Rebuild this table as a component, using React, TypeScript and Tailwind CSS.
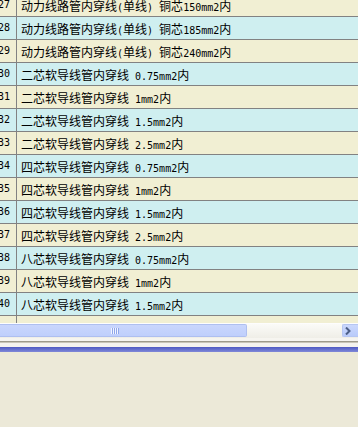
import React from "react";

type Row = { no: number; name: string };

const rows: Row[] = [
  { no: 27, name: "动力线路管内穿线(单线) 铜芯150mm2内" },
  { no: 28, name: "动力线路管内穿线(单线) 铜芯185mm2内" },
  { no: 29, name: "动力线路管内穿线(单线) 铜芯240mm2内" },
  { no: 30, name: "二芯软导线管内穿线 0.75mm2内" },
  { no: 31, name: "二芯软导线管内穿线 1mm2内" },
  { no: 32, name: "二芯软导线管内穿线 1.5mm2内" },
  { no: 33, name: "二芯软导线管内穿线 2.5mm2内" },
  { no: 34, name: "四芯软导线管内穿线 0.75mm2内" },
  { no: 35, name: "四芯软导线管内穿线 1mm2内" },
  { no: 36, name: "四芯软导线管内穿线 1.5mm2内" },
  { no: 37, name: "四芯软导线管内穿线 2.5mm2内" },
  { no: 38, name: "八芯软导线管内穿线 0.75mm2内" },
  { no: 39, name: "八芯软导线管内穿线 1mm2内" },
  { no: 40, name: "八芯软导线管内穿线 1.5mm2内" },
];

const latin = { fontFamily: '"DejaVu Sans Mono", "Liberation Mono", monospace' };
const cjk = { fontFamily: '"Noto Sans CJK SC", "Noto Sans", sans-serif' };

// Half-width runs in a 6px-advance mono face, full-width runs in the CJK face.
function MixedText({ text }: { text: string }) {
  const parts = text.split(/([\u0000-\u00ff]+)/).filter((p) => p.length > 0);
  return (
    <span className="whitespace-pre">
      {parts.map((p, i) =>
        /^[\u0000-\u00ff]+$/.test(p) ? (
          <span key={i} style={latin} className="text-[10px]">
            {p}
          </span>
        ) : (
          <span key={i} style={cjk} className="text-[12px]">
            {p}
          </span>
        )
      )}
    </span>
  );
}

function TableRow({ row, index }: { row: Row | null; index: number }) {
  const bg = index % 2 === 0 ? "bg-[#f1efd3]" : "bg-[#cfeff0]";
  return (
    <div className={`flex h-[23px] shrink-0 border-b border-[#828282] ${bg}`}>
      <div
        style={latin}
        className="flex w-[17px] shrink-0 items-center justify-end overflow-hidden border-r border-[#828282] pr-[6px] text-[10px] leading-none text-black"
      >
        <span className="whitespace-pre">{row ? row.no : ""}</span>
      </div>
      <div className="flex flex-1 items-center pl-[4px] leading-none text-black">
        {row ? <MixedText text={row.name} /> : null}
      </div>
    </div>
  );
}

function Grip() {
  return (
    <div className="ml-[111px] flex h-[6px] gap-0">
      {[0, 1, 2, 3].map((i) => (
        <div key={i} className="flex">
          <div className="h-full w-[1px] bg-[#f2f5ff]" />
          <div className="h-full w-[1px] bg-[#8fa6ea]" />
        </div>
      ))}
    </div>
  );
}

function HScrollBar() {
  return (
    <div className="flex h-[15px] shrink-0 border-t border-[#fdfdfd] bg-gradient-to-b from-[#fbfbf8] to-[#efeee7]">
      <div className="flex h-[13px] w-[247px] shrink-0 items-center rounded-r-[2px] border border-l-0 border-[#aebff0] bg-gradient-to-b from-[#c9d6fd] to-[#bfcffc]">
        <Grip />
      </div>
      <div className="flex-1" />
      <div className="flex h-[13px] w-[16px] shrink-0 items-center rounded-l-[2px] border border-r-0 border-[#b6c6f2] bg-gradient-to-b from-[#cbd8fd] to-[#b9cbfa] pl-[2px]">
        <svg width="6" height="8" viewBox="0 0 6 8">
          <path d="M1 0.5 L4.5 4 L1 7.5" fill="none" stroke="#4d5f87" strokeWidth="2" />
        </svg>
      </div>
    </div>
  );
}

export default function App() {
  return (
    <div className="flex h-[427px] w-[358px] flex-col overflow-hidden bg-[#ece9d8]">
      <div className="h-[323px] shrink-0 overflow-hidden bg-[#f1efd3]">
        <div className="-mt-[6px] flex flex-col">
          {rows.map((r, i) => (
            <TableRow key={r.no} row={r} index={i} />
          ))}
          <TableRow row={null} index={rows.length} />
        </div>
      </div>
      <HScrollBar />
      <div className="h-[3px] shrink-0 bg-[#f6f5f0]" />
      <div className="h-[1px] shrink-0 bg-[#9d9a8b]" />
      <div className="h-[1px] shrink-0 bg-[#c9c6b8]" />
      <div className="h-[4px] shrink-0 bg-[#f4f3ee]" />
      <div className="h-[5px] shrink-0 bg-gradient-to-b from-[#4e59c2] to-[#8088d8]" />
      <div className="flex-1" />
    </div>
  );
}
